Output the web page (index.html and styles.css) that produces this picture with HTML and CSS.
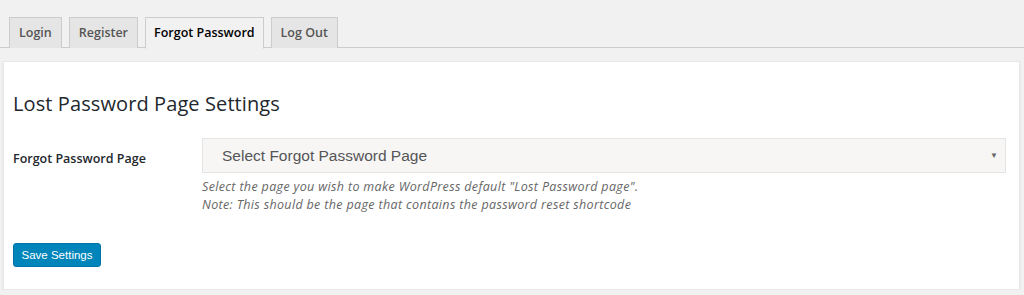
FILE: index.html
```html
<!DOCTYPE html>
<html lang="en">
<head>
    <meta charset="UTF-8">
    <title>Lost Password Page Settings</title>
    <link rel="stylesheet" href="styles.css">
</head>
<body>
    <div class="tabs">
        <a class="tab">Login</a>
        <a class="tab">Register</a>
        <a class="tab active">Forgot Password</a>
        <a class="tab">Log Out</a>
    </div>

    <div class="card">
        <h2>Lost Password Page Settings</h2>
        <div class="form-row">
            <label class="form-label">Forgot Password Page</label>
            <div class="form-field">
                <div class="select-box">
                    <span>Select Forgot Password Page</span>
                    <span class="caret">&#9660;</span>
                </div>
                <p class="desc">Select the page you wish to make WordPress default "Lost Password page".</p>
                <p class="desc">Note: This should be the page that contains the password reset shortcode</p>
            </div>
        </div>
        <button class="save-btn">Save Settings</button>
    </div>
</body>
</html>
```

FILE: styles.css
```css
* {
    margin: 0;
    padding: 0;
    box-sizing: border-box;
}

body {
    background: #f1f1f1;
    font-family: "Open Sans", "Noto Sans", sans-serif;
    color: #23282d;
}

.tabs {
    display: flex;
    gap: 7px;
    padding: 17px 0 0 9px;
    border-bottom: 1px solid #ccc;
    height: 48px;
}

.tab {
    display: block;
    height: 31px;
    padding: 0 9px;
    border: 1px solid #ccc;
    border-bottom: none;
    background: #e5e5e5;
    color: #555;
    font-size: 12.5px;
    font-weight: 600;
    line-height: 29px;
}

.tab.active {
    padding: 0 8px;
    background: #f1f1f1;
    color: #000;
    margin-bottom: -1px;
    border-bottom: 1px solid #f1f1f1;
    height: 32px;
}

.card {
    background: #fff;
    margin: 13px 4px 0 3px;
    padding: 30px 9px 22px;
    height: 229px;
    box-shadow: 0 1px 2px rgba(0, 0, 0, 0.08);
    border: 1px solid #e8e8e8;
}

.card h2 {
    font-size: 20px;
    font-weight: 400;
    line-height: 24px;
    letter-spacing: 0.1px;
    color: #23282d;
}

.form-row {
    display: flex;
    margin-top: 22px;
}

.form-label {
    width: 189px;
    padding-top: 12px;
    font-size: 12.5px;
    font-weight: 600;
    color: #23282d;
}

.form-field {
    flex: 1;
    padding-right: 4px;
}

.select-box {
    display: flex;
    justify-content: space-between;
    align-items: center;
    height: 35px;
    padding: 0 7px 0 19px;
    background: #f7f6f5;
    border: 1px solid #e5e5e5;
    font-family: "Liberation Sans", Arial, sans-serif;
    font-size: 15.5px;
    color: #555;
}

.caret {
    font-size: 8px;
    color: #666;
}

.desc {
    font-size: 12.5px;
    font-style: italic;
    letter-spacing: 0.35px;
    color: #666;
    line-height: 18px;
}

.select-box + .desc {
    margin-top: 5px;
}

.save-btn {
    display: block;
    margin-top: 29px;
    width: 88px;
    height: 24px;
    background: #0085ba;
    border: 1px solid #0073aa;
    border-radius: 3px;
    color: #fff;
    font-family: "Liberation Sans", Arial, sans-serif;
    font-size: 11.5px;
}
```
